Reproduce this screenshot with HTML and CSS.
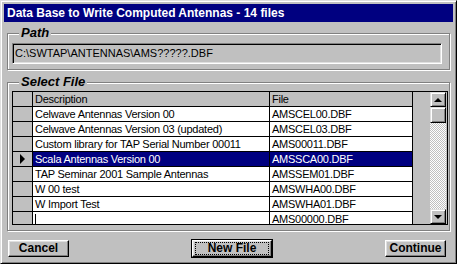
FILE: index.html
```html
<!DOCTYPE html>
<html>
<head>
<meta charset="utf-8">
<link rel="stylesheet" href="styles.css">
</head>
<body>
<div class="window">
  <div class="titlebar">Data Base to Write Computed Antennas - 14 files</div>

  <div class="group group-path">
    <span class="legend">Path</span>
    <div class="field">C:\SWTAP\ANTENNAS\AMS?????.DBF</div>
  </div>

  <div class="group group-select">
    <span class="legend">Select File</span>
    <div class="grid">
      <div class="grid-data">
        <div class="row header"><div class="ind"></div><div class="cell desc">Description</div><div class="cell file">File</div></div>
        <div class="row"><div class="ind"></div><div class="cell desc">Celwave Antennas Version 00</div><div class="cell file">AMSCEL00.DBF</div></div>
        <div class="row"><div class="ind"></div><div class="cell desc">Celwave Antennas Version 03 (updated)</div><div class="cell file">AMSCEL03.DBF</div></div>
        <div class="row"><div class="ind"></div><div class="cell desc">Custom library for TAP Serial Number 00011</div><div class="cell file">AMS00011.DBF</div></div>
        <div class="row selected"><div class="ind"><span class="pointer"></span></div><div class="cell desc">Scala Antennas Version 00</div><div class="cell file">AMSSCA00.DBF</div></div>
        <div class="row"><div class="ind"></div><div class="cell desc">TAP Seminar 2001 Sample Antennas</div><div class="cell file">AMSSEM01.DBF</div></div>
        <div class="row"><div class="ind"></div><div class="cell desc">W 00 test</div><div class="cell file">AMSWHA00.DBF</div></div>
        <div class="row"><div class="ind"></div><div class="cell desc">W Import Test</div><div class="cell file">AMSWHA01.DBF</div></div>
        <div class="row"><div class="ind"></div><div class="cell desc"><span class="caret"></span></div><div class="cell file">AMS00000.DBF</div></div>
      </div>
      <div class="filler"></div>
      <div class="scrollbar">
        <div class="sb-btn"><span class="arrow-up"></span></div>
        <div class="sb-thumb"></div>
        <div class="sb-track"></div>
        <div class="sb-btn"><span class="arrow-down"></span></div>
      </div>
    </div>
  </div>

  <div class="buttons">
    <div class="btn btn-cancel">Cancel</div>
    <div class="btn-default"><div class="btn btn-new"><span class="focus">New File</span></div></div>
    <div class="btn btn-continue">Continue</div>
  </div>
</div>
</body>
</html>
```

FILE: styles.css
```css
html, body {
  margin: 0;
  padding: 0;
  background: #c0c0c0;
}

.window {
  width: 457px;
  height: 264px;
  box-sizing: border-box;
  background: #c0c0c0;
  border: 1px solid;
  border-color: #dfdfdf #000 #000 #dfdfdf;
  box-shadow: inset 1px 1px 0 #fff, inset -1px -1px 0 #808080;
  padding: 3px;
  font-family: "Liberation Sans", Arial, sans-serif;
  font-size: 11px;
  color: #000;
}

.titlebar {
  height: 18px;
  background: #000080;
  color: #fff;
  font-weight: bold;
  font-size: 12px;
  line-height: 18px;
  padding-left: 3px;
  white-space: nowrap;
}

.group {
  position: relative;
  box-sizing: border-box;
  margin: 0 3px 0 3px;
  border: 1px solid #808080;
  box-shadow: inset 1px 1px 0 #fff, 1px 1px 0 #fff;
}

.group-path {
  margin-top: 11px;
  height: 37px;
  padding: 9px 7px 0 4px;
}

.group-select {
  margin-top: 12px;
  height: 149px;
  padding: 8px 1px 0 4px;
}

.legend {
  position: absolute;
  top: -9px;
  left: 11px;
  padding: 0 2px;
  background: #c0c0c0;
  font-weight: bold;
  font-style: italic;
  font-size: 13px;
  line-height: 16px;
}

.field {
  box-sizing: border-box;
  height: 21px;
  border: 1px solid;
  border-color: #808080 #fff #fff #808080;
  box-shadow: inset 1px 1px 0 #000, inset -1px -1px 0 #dfdfdf;
  padding-left: 2px;
  font-size: 11px;
  line-height: 19px;
  white-space: nowrap;
}

.grid {
  box-sizing: border-box;
  height: 134px;
  border: 1px solid #000;
  display: flex;
  overflow: hidden;
}

.grid-data {
  width: 400px;
  flex: none;
  overflow: hidden;
  background: #c0c0c0;
}

.row {
  display: flex;
  height: 15px;
  box-sizing: border-box;
  border-bottom: 1px solid #000;
}

.ind {
  width: 19px;
  flex: none;
  border-right: 1px solid #000;
  background: #c0c0c0;
  display: flex;
  align-items: center;
  justify-content: center;
}

.cell {
  flex: none;
  box-sizing: border-box;
  padding-left: 2px;
  background: #fff;
  line-height: 14px;
  font-size: 11px;
  letter-spacing: -0.25px;
  white-space: nowrap;
  overflow: hidden;
  border-right: 1px solid #000;
}

.desc { width: 237px; }
.file { width: 143px; }

.header .cell {
  background: #c0c0c0;
}

.selected .cell {
  background: #000080;
  color: #fff;
}

.pointer {
  width: 0;
  height: 0;
  border-top: 5px solid transparent;
  border-bottom: 5px solid transparent;
  border-left: 5px solid #000;
}

.caret {
  display: inline-block;
  width: 1px;
  height: 11px;
  background: #000;
  vertical-align: -2px;
}

.filler {
  width: 17px;
  flex: none;
  background: #c0c0c0;
}

.scrollbar {
  width: 16px;
  flex: none;
  display: flex;
  flex-direction: column;
}

.sb-btn, .sb-thumb {
  box-sizing: border-box;
  height: 15px;
  flex: none;
  background: #c0c0c0;
  border: 1px solid;
  border-color: #dfdfdf #000 #000 #dfdfdf;
  box-shadow: inset 1px 1px 0 #fff, inset -1px -1px 0 #808080;
  display: flex;
  align-items: center;
  justify-content: center;
}

.sb-thumb {
  height: 16px;
}

.sb-track {
  flex: 1;
  background-color: #fff;
  background-image: repeating-conic-gradient(#c0c0c0 0 25%, #fff 0 50%);
  background-size: 2px 2px;
}

.arrow-up {
  width: 0;
  height: 0;
  border-left: 4px solid transparent;
  border-right: 4px solid transparent;
  border-bottom: 4px solid #000;
}

.arrow-down {
  width: 0;
  height: 0;
  border-left: 4px solid transparent;
  border-right: 4px solid transparent;
  border-top: 4px solid #000;
}

.buttons {
  display: flex;
  align-items: center;
  margin: 8px 7px 0 4px;
}

.btn {
  box-sizing: border-box;
  height: 17px;
  background: #c0c0c0;
  border: 1px solid;
  border-color: #fff #000 #000 #fff;
  box-shadow: inset -1px -1px 0 #808080, inset 1px 1px 0 #dfdfdf;
  font-weight: bold;
  font-size: 12px;
  line-height: 15px;
  text-align: center;
}

.btn-cancel, .btn-continue {
  width: 61px;
}

.btn-default {
  margin-left: 122px;
  border: 1px solid #000;
  box-sizing: border-box;
  width: 82px;
  height: 19px;
}

.btn-new {
  height: 17px;
  display: flex;
  align-items: center;
  justify-content: center;
}

.focus {
  box-sizing: border-box;
  width: 72px;
  height: 11px;
  line-height: 10px;
  outline: 1px dotted #000;
  font-size: 12px;
}

.btn-continue {
  margin-left: auto;
}
```
